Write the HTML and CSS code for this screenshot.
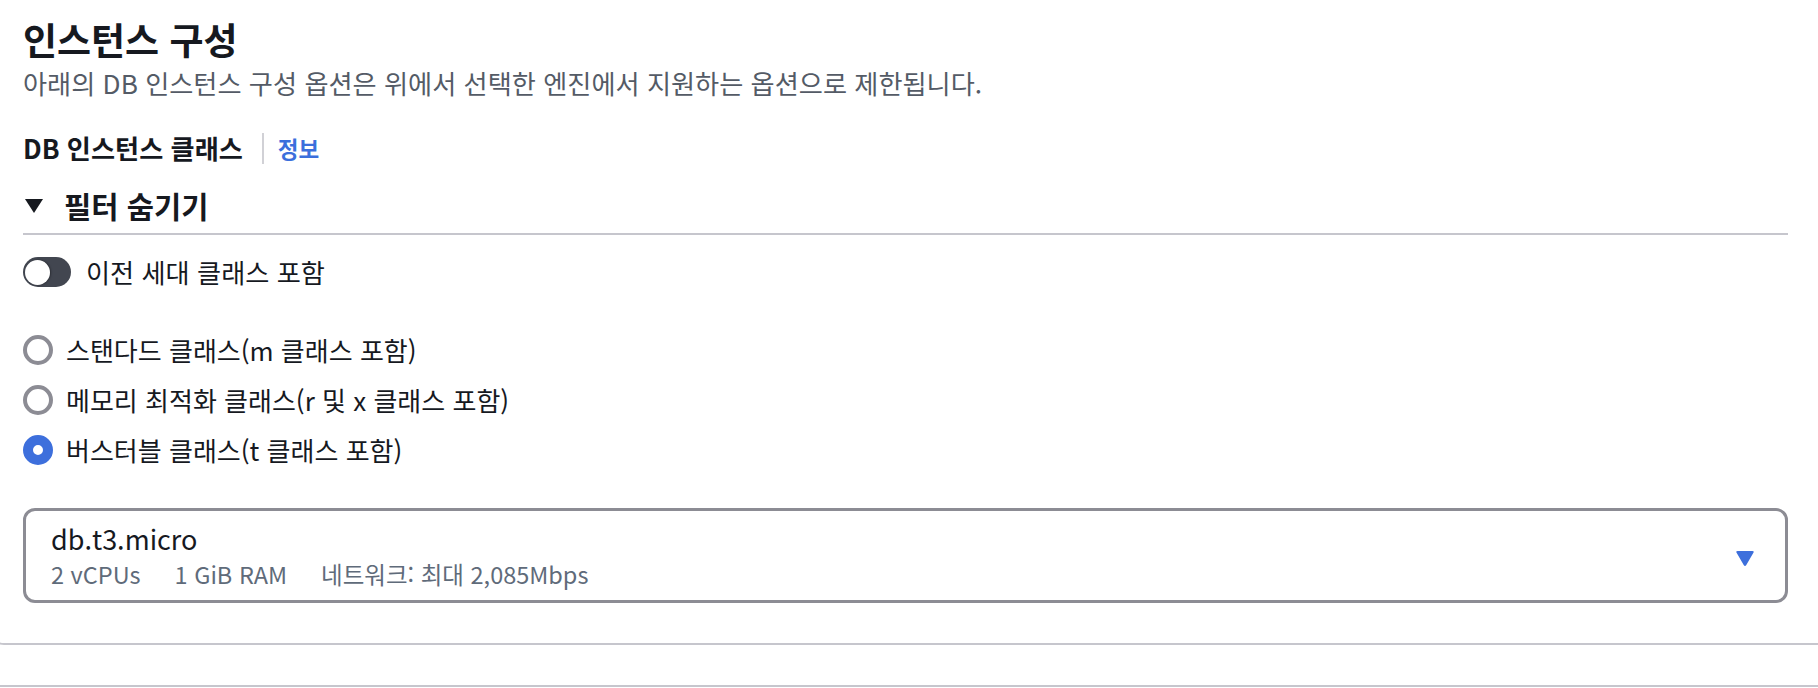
FILE: index.html
```html
<!DOCTYPE html>
<html lang="ko">
<head>
<meta charset="utf-8">
<title>인스턴스 구성</title>
<link rel="stylesheet" href="styles.css">
</head>
<body>
<section class="card">
  <h2 class="title">인스턴스 구성</h2>
  <p class="subtitle">아래의 DB 인스턴스 구성 옵션은 위에서 선택한 엔진에서 지원하는 옵션으로 제한됩니다.</p>

  <div class="label-row">
    <span class="label">DB 인스턴스 클래스</span>
    <span class="sep"></span>
    <a class="info">정보</a>
  </div>

  <div class="filter-head">
    <svg class="caret" width="18" height="14" viewBox="0 0 18 14"><polygon points="0,0 18,0 9,14" fill="#16191f"/></svg>
    <span class="filter-text">필터 숨기기</span>
  </div>

  <div class="toggle-row">
    <span class="toggle"><span class="knob"></span></span>
    <span class="toggle-label">이전 세대 클래스 포함</span>
  </div>

  <div class="radios">
    <div class="radio-row"><span class="radio"></span><span class="radio-label">스탠다드 클래스(m 클래스 포함)</span></div>
    <div class="radio-row"><span class="radio"></span><span class="radio-label">메모리 최적화 클래스(r 및 x 클래스 포함)</span></div>
    <div class="radio-row"><span class="radio checked"></span><span class="radio-label">버스터블 클래스(t 클래스 포함)</span></div>
  </div>

  <div class="select">
    <div class="select-text">
      <div class="select-main">db.t3.micro</div>
      <div class="select-sub"><span>2 vCPUs</span><span>1 GiB RAM</span><span>네트워크: 최대 2,085Mbps</span></div>
    </div>
    <svg class="select-caret" width="20" height="17" viewBox="0 0 20 17"><path d="M2.5 1 H17.5 Q19.5 1 18.4 2.8 L11.3 15 Q10 17 8.7 15 L1.6 2.8 Q0.5 1 2.5 1 Z" fill="#3d6fdc"/></svg>
  </div>
</section>
<section class="card next"></section>
</body>
</html>
```

FILE: styles.css
```css
html, body {
  margin: 0;
  padding: 0;
  background: #ffffff;
}
body {
  width: 1818px;
  height: 688px;
  overflow: hidden;
  font-family: "Noto Sans CJK KR", "Noto Sans", sans-serif;
  color: #16191f;
}
.card {
  margin: 0 -20px 0 -12px;
  padding: 17px 48px 40px 33px;
  border: 2px solid #c6c6cd;
  border-top: none;
  border-radius: 0 0 16px 16px;
  display: flex;
  flex-direction: column;
}
.card.next {
  margin-top: 40px;
  border-top: 2px solid #c6c6cd;
  border-bottom: none;
  border-radius: 16px 16px 0 0;
  padding: 0;
  height: 0;
}
.title {
  margin: 0;
  font-size: 37px;
  line-height: 44px;
  font-weight: 700;
  color: #16191f;
}
.subtitle {
  margin: 6px 0 0;
  font-size: 26.2px;
  line-height: 32px;
  color: #545b66;
}
.label-row {
  margin-top: 33px;
  height: 32px;
  display: flex;
  align-items: center;
}
.label {
  font-size: 26.2px;
  font-weight: 700;
  line-height: 32px;
}
.sep {
  width: 2px;
  height: 31px;
  background: #d1d1d6;
  margin: 0 14px 0 19px;
}
.info {
  font-size: 22.5px;
  font-weight: 700;
  color: #3b6fdc;
  line-height: 32px;
}
.filter-head {
  margin-top: 24px;
  height: 36px;
  padding-bottom: 9px;
  border-bottom: 2px solid #c6c6cd;
  display: flex;
  align-items: center;
}
.caret {
  margin-left: 2px;
  margin-right: 21px;
}
.filter-text {
  font-size: 29.6px;
  font-weight: 700;
  line-height: 36px;
}
.toggle-row {
  margin-top: 22px;
  height: 30px;
  display: flex;
  align-items: center;
}
.toggle {
  width: 48px;
  height: 30px;
  border-radius: 15px;
  background: #424650;
  display: flex;
  align-items: center;
  padding-left: 2px;
  box-sizing: border-box;
}
.knob {
  width: 25px;
  height: 25px;
  border-radius: 50%;
  background: #ffffff;
  box-shadow: 1px 0 2px rgba(0,0,0,0.35);
}
.toggle-label {
  margin-left: 15px;
  font-size: 26.2px;
  line-height: 30px;
}
.radios {
  margin-top: 38px;
  display: flex;
  flex-direction: column;
}
.radio-row {
  height: 50px;
  display: flex;
  align-items: center;
}
.radio {
  width: 30px;
  height: 30px;
  box-sizing: border-box;
  border: 4px solid #8c8c94;
  border-radius: 50%;
  flex: none;
}
.radio.checked {
  border: 10px solid #3d6fdc;
  background: #ffffff;
}
.radio-label {
  margin-left: 13px;
  font-size: 26px;
  line-height: 32px;
}
.select {
  margin-top: 33px;
  height: 95px;
  box-sizing: border-box;
  border: 3px solid #8c8c94;
  border-radius: 12px;
  padding: 12px 30px 10px 25px;
  display: flex;
  align-items: center;
  justify-content: space-between;
}
.select-text {
  display: flex;
  flex-direction: column;
  align-self: flex-start;
}
.select-main {
  font-size: 27px;
  line-height: 32px;
  color: #16191f;
}
.select-sub {
  margin-top: 4px;
  font-size: 23.5px;
  line-height: 30px;
  color: #5f6b7a;
  display: flex;
  gap: 34px;
}
.select-caret {
  margin-top: 4px;
}
```
